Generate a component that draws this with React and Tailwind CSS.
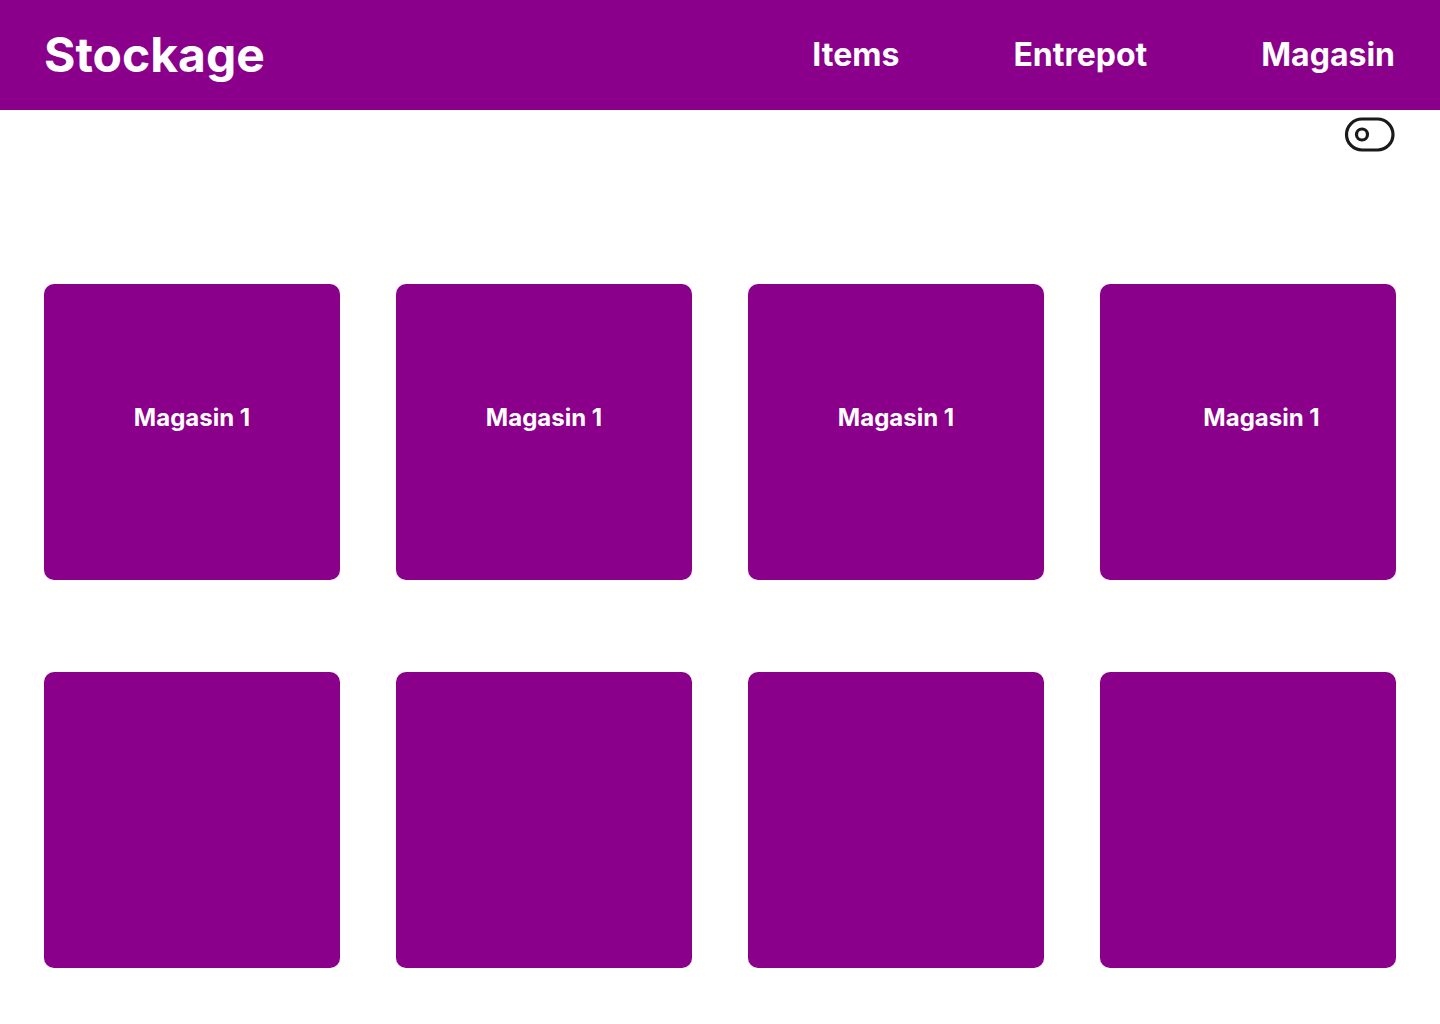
export default function App(){

  const cards = [
    { label: "Magasin 1" },
    { label: "Magasin 1" },
    { label: "Magasin 1" },
    { label: "Magasin 1", shift: true },
    {}, {}, {}, {},
  ];

  return(

    <div className="min-h-screen bg-white font-['Inter',sans-serif]">

      {/* HEADER */}

      <header className="h-[110px] bg-[#8b008b] pl-[44px] pr-[45px] flex items-center justify-between">

        <h1 className="text-[48px] font-bold text-white leading-none">
          Stockage
        </h1>

        <nav className="flex items-center gap-[114px]">
          <a className="text-[32px] font-bold text-white">Items</a>
          <a className="text-[32px] font-bold text-white">Entrepot</a>
          <a className="text-[32px] font-bold text-white">Magasin</a>
        </nav>

      </header>

      {/* TOGGLE */}

      <div className="flex justify-end px-[44px] pt-[7px]">
        <svg width="52" height="36" viewBox="0 0 52 36" fill="none" stroke="#1a1a1a" strokeWidth="3.2">
          <rect x="2.5" y="2" width="46.5" height="31" rx="15.5"/>
          <circle cx="18" cy="17.5" r="5.5"/>
        </svg>
      </div>

      {/* GRID */}

      <main className="px-[44px] mt-[131px] grid grid-cols-4 gap-x-[56px] gap-y-[92px]">

        {cards.map((c,i)=>(

          <div
            key={i}
            className="h-[296px] bg-[#8b008b] rounded-[10px] flex items-center justify-center"
          >
            {c.label && (
              <span className={"text-[24px] font-bold text-white pb-[28px] " + (c.shift ? "pl-[27px]" : "")}>
                {c.label}
              </span>
            )}
          </div>

        ))}

      </main>

    </div>

  );

}
